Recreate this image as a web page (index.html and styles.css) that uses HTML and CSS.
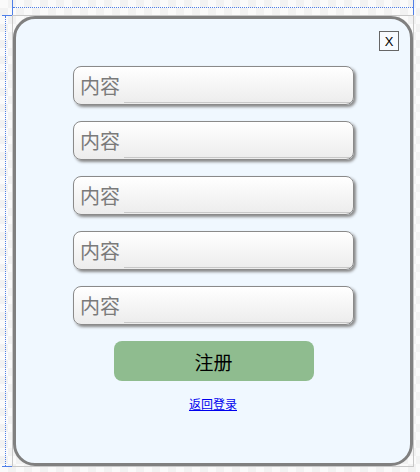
FILE: index.html
```html
<!DOCTYPE html>
<html lang="zh-CN">
<head>
    <meta charset="UTF-8">
    <meta name="viewport" content="width=device-width, initial-scale=1.0">
    <title>注册</title>
    <link rel="stylesheet" href="styles.css">
</head>
<body>

    <!-- ruler guides of the design canvas -->
    <div class="guide guide-top"></div>
    <div class="guide guide-left"></div>
    <div class="mark mark-tl"></div>
    <div class="mark mark-tr"></div>
    <div class="mark mark-lt"></div>
    <div class="mark mark-lb"></div>

    <div class="frame">
        <div class="panel">
            <button type="button" class="close-btn">X</button>
            <form class="reg-form">
                <input type="text" class="field" placeholder="内容">
                <input type="text" class="field" placeholder="内容">
                <input type="text" class="field" placeholder="内容">
                <input type="password" class="field" placeholder="内容">
                <input type="password" class="field" placeholder="内容">
                <button type="submit" class="reg-btn">注册</button>
            </form>
            <a href="#" class="back-link">返回登录</a>
        </div>
    </div>

</body>
</html>
```

FILE: styles.css
```css
body {
    margin: 0;
    width: 420px;
    height: 472px;
    position: relative;
    font-family: "Noto Sans CJK SC", "Liberation Sans", sans-serif;
    background-color: #f7f7f7;
    background-image: conic-gradient(#f2f2f2 25%, #fafafa 0 50%, #f2f2f2 0 75%, #fafafa 0);
    background-size: 16px 16px;
    overflow: hidden;
}
.guide {
    position: absolute;
}
.guide-top {
    left: 13px;
    top: 7px;
    width: 400px;
    border-top: 1px dotted #4f7fe8;
}
.guide-left {
    left: 5px;
    top: 16px;
    height: 450px;
    border-left: 1px dotted #4f7fe8;
}
.mark {
    position: absolute;
    background: #4f7fe8;
}
.mark-tl {
    left: 12px;
    top: 0;
    width: 1px;
    height: 15px;
}
.mark-tr {
    left: 413px;
    top: 0;
    width: 1px;
    height: 15px;
}
.mark-lt {
    left: 2px;
    top: 15px;
    width: 10px;
    height: 1px;
}
.mark-lb {
    left: 2px;
    top: 466px;
    width: 10px;
    height: 1px;
}
.frame {
    margin: 15px 0 0 12px;
    width: 400px;
    height: 450px;
    border: 1px solid #c8c8c8;
}
.panel {
    position: relative;
    box-sizing: border-box;
    width: 400px;
    height: 450px;
    margin-top: 0;
    background: #f0f8ff;
    border: 3px solid #808080;
    border-radius: 22px;
    padding-top: 47px;
    display: flex;
    flex-direction: column;
    align-items: center;
}
.close-btn {
    position: absolute;
    top: 12px;
    right: 11px;
    width: 20px;
    height: 20px;
    padding: 0;
    border: 1px solid #666;
    background: #f8fbff;
    font-family: "Liberation Sans", Arial, sans-serif;
    font-size: 13px;
    color: #000;
    cursor: pointer;
}
.reg-form {
    display: flex;
    flex-direction: column;
    align-items: center;
    gap: 16px;
    margin-left: 1px;
}
.field {
    box-sizing: border-box;
    width: 281px;
    height: 39px;
    padding: 0 6px;
    border: 1px solid #8a8a8a;
    border-radius: 8px;
    box-shadow: 2px 2px 3px #888;
    background:
        linear-gradient(#c8c8c8, #c8c8c8) no-repeat 50px calc(100% - 1px) / calc(100% - 52px) 1px,
        linear-gradient(#ffffff, #ececec);
    font-family: "Noto Sans CJK SC", sans-serif;
    font-size: 20px;
    color: #333;
    outline: none;
}
.field::placeholder {
    color: #7a7a7a;
}
.reg-btn {
    width: 200px;
    height: 40px;
    border: none;
    border-radius: 8px;
    background-color: #8fbc8f;
    font-family: "Noto Sans CJK SC", sans-serif;
    font-size: 19px;
    color: #000;
    cursor: pointer;
}
.back-link {
    margin-top: 14px;
    font-size: 12px;
    color: #0000ee;
    text-decoration: underline;
}
```
